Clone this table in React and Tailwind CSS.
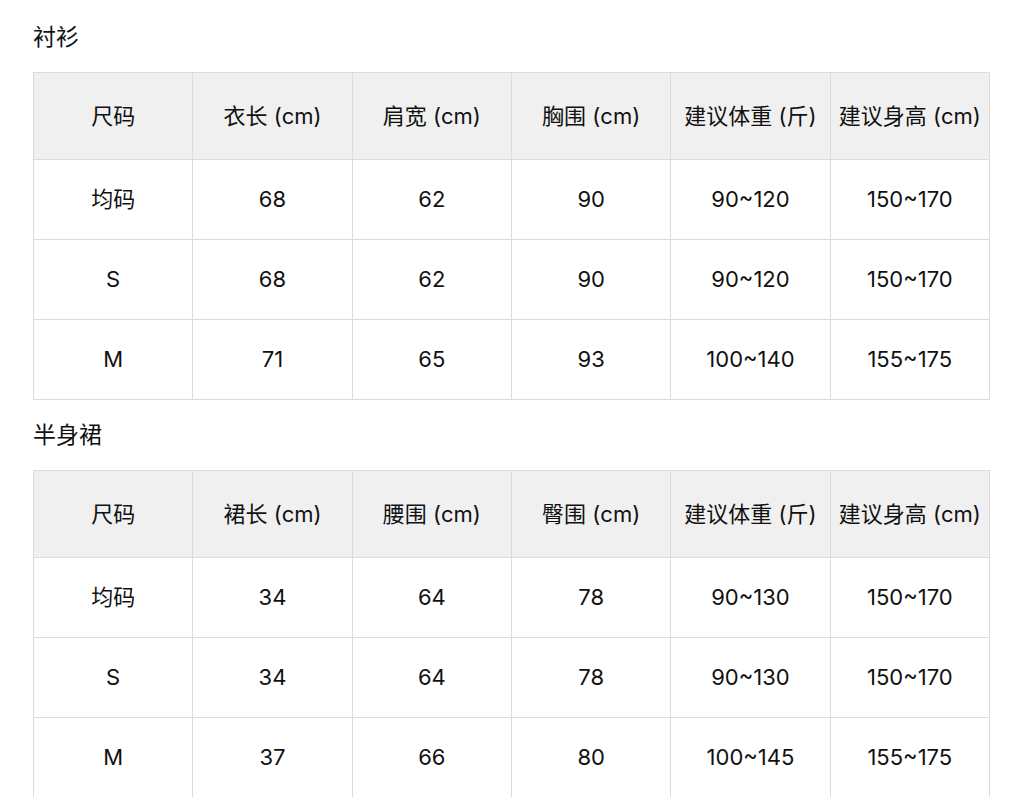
import React from "react";

const tables = [
  {
    title: "衬衫",
    head: ["尺码", "衣长 (cm)", "肩宽 (cm)", "胸围 (cm)", "建议体重 (斤)", "建议身高 (cm)"],
    rows: [
      ["均码", "68", "62", "90", "90~120", "150~170"],
      ["S", "68", "62", "90", "90~120", "150~170"],
      ["M", "71", "65", "93", "100~140", "155~175"],
    ],
  },
  {
    title: "半身裙",
    head: ["尺码", "裙长 (cm)", "腰围 (cm)", "臀围 (cm)", "建议体重 (斤)", "建议身高 (cm)"],
    rows: [
      ["均码", "34", "64", "78", "90~130", "150~170"],
      ["S", "34", "64", "78", "90~130", "150~170"],
      ["M", "37", "66", "80", "100~145", "155~175"],
    ],
  },
];

const SizeTable = ({ title, head, rows, first }) => (
  <section className={first ? "" : "mt-[20px]"}>
    <h2 className="text-[23px] leading-[30px] font-normal mb-[20px]">{title}</h2>
    <table className="w-[957px] table-fixed border-collapse">
      <thead>
        <tr className="h-[87px] bg-[#f0f0f0]">
          {head.map((h, i) => (
            <th key={i} className="border border-[#dcdcdc] font-normal text-center">
              {h}
            </th>
          ))}
        </tr>
      </thead>
      <tbody>
        {rows.map((row, r) => (
          <tr key={r} className="h-[80px]">
            {row.map((c, i) => (
              <td key={i} className="border border-[#dcdcdc] text-center">
                {c}
              </td>
            ))}
          </tr>
        ))}
      </tbody>
    </table>
  </section>
);

export default function App() {
  return (
    <div
      className="min-h-screen bg-white pl-[33px] pt-[22px] text-[22px] text-[#111111]"
      style={{ fontFamily: 'Inter, "Noto Sans CJK SC", sans-serif' }}
    >
      {tables.map((t, i) => (
        <SizeTable key={t.title} {...t} first={i === 0} />
      ))}
    </div>
  );
}
